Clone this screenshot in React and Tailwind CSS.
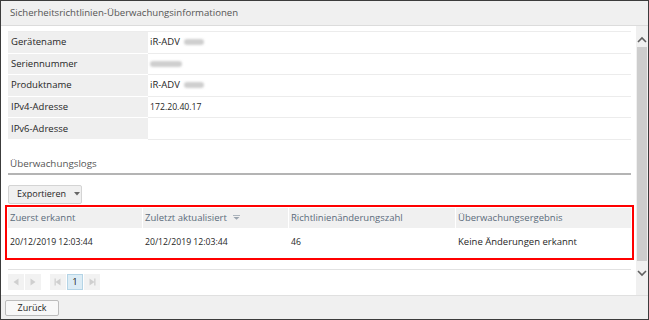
import React from "react";

const info = [
  { label: "Gerätename", value: "iR-ADV", blur: "w-[20px]" },
  { label: "Seriennummer", value: "", blur: "w-[32px]" },
  { label: "Produktname", value: "iR-ADV", blur: "w-[20px]" },
  { label: "IPv4-Adresse", value: "172.20.40.17", num: true },
  { label: "IPv6-Adresse", value: "" },
];

function Blur({ w }) {
  return <span className={`inline-block h-[6px] ${w} bg-[#cfcfcf] rounded-sm blur-[1px] align-middle`}></span>;
}

function Chevron({ up }) {
  return (
    <svg width="10" height="7" viewBox="0 0 10 7" className="text-[#606060]">
      <path d={up ? "M1 6 L5 2 L9 6" : "M1 1 L5 5 L9 1"} fill="none" stroke="currentColor" strokeWidth="1.6" />
    </svg>
  );
}

function PageBtn({ children, active }) {
  return (
    <div
      className={`h-[16px] w-[16px] flex items-center justify-center ${
        active ? "bg-[#dcecf5] border border-[#b4d4e6] text-[#222] text-[9.5px]" : "bg-[#f2f2f2]"
      }`}
    >
      {children}
    </div>
  );
}

function Tri({ dir, bar }) {
  return (
    <svg width="8" height="8" viewBox="0 0 8 8">
      {bar === "left" && <rect x="0.5" y="0.5" width="1.3" height="7" fill="#cfcfcf" />}
      {bar === "right" && <rect x="6.2" y="0.5" width="1.3" height="7" fill="#cfcfcf" />}
      <path d={dir === "left" ? "M6.5 0.5 V7.5 L1.5 4 Z" : "M1.5 0.5 V7.5 L6.5 4 Z"} fill="#cfcfcf" />
    </svg>
  );
}

export default function App() {
  return (
    <div
      className="w-[649px] h-[320px] border border-[#3c3c3c] bg-white flex flex-col text-[#262626] overflow-hidden"
      style={{ fontFamily: "'Open Sans', 'Noto Sans', sans-serif" }}
    >
      <div className="h-[25px] shrink-0 bg-[#f0f0f0] border-b border-[#dcdcdc] flex items-center pl-[9px] text-[9.6px] text-[#555]">
        Sicherheitsrichtlinien-Überwachungsinformationen
      </div>

      <div className="flex-1 flex min-h-0">
        <div className="flex-1 pl-[7px] pr-[5px] pt-[5px] text-[9.5px]">
          <div className="border-t border-[#ececec]">
            {info.map((r) => (
              <div key={r.label} className="flex h-[21.6px]">
                <div className="w-[140px] bg-[#efefef] border-b border-white flex items-center pl-[3px]">{r.label}</div>
                <div className="flex-1 border-b border-[#ececec] flex items-center gap-[4px] pl-[2px]">
                  {r.value && <span className={r.num ? "text-[8.7px]" : ""}>{r.value}</span>}
                  {r.blur && <Blur w={r.blur} />}
                </div>
              </div>
            ))}
          </div>

          <div className="mt-[17px] pl-[2px] pb-[1px] border-b-2 border-[#b4b4b4] text-[9.8px] text-[#555]">
            Überwachungslogs
          </div>

          <button className="mt-[10px] h-[19px] w-[74px] bg-[#f0f0f0] border border-[#d4d4d4] rounded-[2px] flex items-center pl-[8px] gap-[8px] text-[9px] text-[#262626]">
            Exportieren
            <svg width="6" height="4" viewBox="0 0 6 4">
              <path d="M0 0 H6 L3 3.5 Z" fill="#666" />
            </svg>
          </button>

          <div className="-mx-[3px] mt-px border-2 border-[#f00] p-px">
            <div className="flex h-[20px] text-[#5b6b7b]">
              <div className="w-[135px] bg-[#f0f0f0] border-r border-white flex items-center pl-[2px]">Zuerst erkannt</div>
              <div className="w-[146px] bg-[#f0f0f0] border-r border-white flex items-center pl-[2px] gap-[6px]">
                Zuletzt aktualisiert
                <svg width="7" height="5" viewBox="0 0 7 5">
                  <path d="M0 0.5 H7" stroke="#9aa4ae" strokeWidth="0.8" />
                  <path d="M0.5 2 H6.5 L3.5 4.8 Z" fill="#9aa4ae" />
                </svg>
              </div>
              <div className="w-[167px] bg-[#f0f0f0] border-r border-white flex items-center pl-[2px]">Richtlinienänderungszahl</div>
              <div className="flex-1 bg-[#f0f0f0] flex items-center pl-[2px]">Überwachungsergebnis</div>
            </div>
            <div className="flex h-[29px]">
              <div className="w-[135px] flex items-center pl-[2px] text-[8.7px]">20/12/2019 12:03:44</div>
              <div className="w-[146px] flex items-center pl-[2px] text-[8.7px]">20/12/2019 12:03:44</div>
              <div className="w-[167px] flex items-center pl-[2px] text-[8.7px]">46</div>
              <div className="flex-1 flex items-center pl-[2px]">Keine Änderungen erkannt</div>
            </div>
          </div>

          <div className="mt-[9px] border-t border-[#e2e2e2] pt-[4px] flex items-center">
            <div className="flex gap-[1px]">
              <PageBtn><Tri dir="left" /></PageBtn>
              <PageBtn><Tri dir="right" /></PageBtn>
            </div>
            <div className="flex gap-[1px] ml-[9px]">
              <PageBtn><Tri dir="left" bar="left" /></PageBtn>
              <PageBtn active>1</PageBtn>
              <PageBtn><Tri dir="right" bar="right" /></PageBtn>
            </div>
          </div>
        </div>

        <div className="w-[12px] shrink-0 bg-[#f0f0f0] flex flex-col items-center pt-[10px] pb-[10px]">
          <Chevron up />
          <div className="mt-[4px] flex-1 w-[10px] bg-[#cdcdcd]"></div>
          <div className="h-[24px] flex items-center">
            <Chevron />
          </div>
        </div>
      </div>

      <div className="h-[24px] shrink-0 bg-[#f0f0f0] border-t border-[#e0e0e0] flex items-center pl-[4px]">
        <button className="h-[16px] w-[54px] bg-[#f8f8f8] border border-[#bcbcbc] rounded-[2px] text-[9px] text-[#262626]">
          Zurück
        </button>
      </div>
    </div>
  );
}
